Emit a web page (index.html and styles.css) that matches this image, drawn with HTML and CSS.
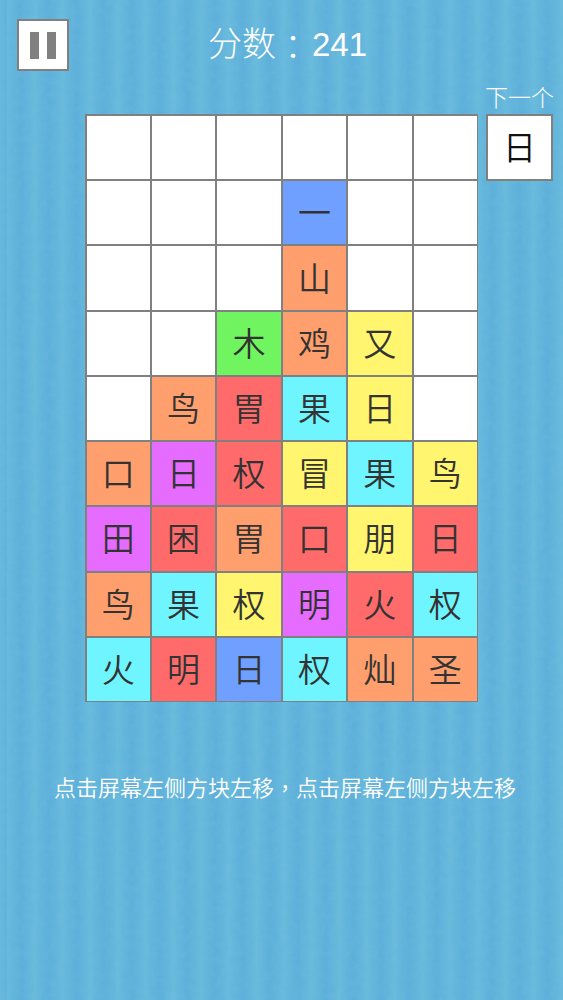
FILE: index.html
```html
<!DOCTYPE html>
<html lang="zh-CN">
<head>
<meta charset="utf-8">
<title>分数</title>
<link rel="stylesheet" href="styles.css">
</head>
<body>
<main class="screen">
  <header class="top">
    <button class="pause" aria-label="暂停"><span class="bar"></span><span class="bar"></span></button>
    <h1 class="score"><span class="zh">分数<span class="punct colon" lang="zh-TW">：</span></span><span class="num">241</span></h1>
  </header>
  <section class="play">
    <div class="board">
      <div class="cell"></div><div class="cell"></div><div class="cell"></div><div class="cell"></div><div class="cell"></div><div class="cell"></div>
      <div class="cell"></div><div class="cell"></div><div class="cell"></div><div class="cell blue">一</div><div class="cell"></div><div class="cell"></div>
      <div class="cell"></div><div class="cell"></div><div class="cell"></div><div class="cell orange">山</div><div class="cell"></div><div class="cell"></div>
      <div class="cell"></div><div class="cell"></div><div class="cell green">木</div><div class="cell orange">鸡</div><div class="cell yellow">又</div><div class="cell"></div>
      <div class="cell"></div><div class="cell orange">鸟</div><div class="cell red">胃</div><div class="cell cyan">果</div><div class="cell yellow">日</div><div class="cell"></div>
      <div class="cell orange">口</div><div class="cell purple">日</div><div class="cell red">权</div><div class="cell yellow">冒</div><div class="cell cyan">果</div><div class="cell yellow">鸟</div>
      <div class="cell purple">田</div><div class="cell red">困</div><div class="cell orange">胃</div><div class="cell red">口</div><div class="cell yellow">朋</div><div class="cell red">日</div>
      <div class="cell orange">鸟</div><div class="cell cyan">果</div><div class="cell yellow">权</div><div class="cell purple">明</div><div class="cell red">火</div><div class="cell cyan">权</div>
      <div class="cell cyan">火</div><div class="cell red">明</div><div class="cell blue">日</div><div class="cell cyan">权</div><div class="cell orange">灿</div><div class="cell orange">圣</div>
    </div>
    <aside class="next">
      <div class="next-label">下一个</div>
      <div class="next-box">日</div>
    </aside>
  </section>
  <p class="hint">点击屏幕左侧方块左移<span class="punct" lang="zh-TW">，</span>点击屏幕左侧方块左移</p>
</main>
</body>
</html>
```
FILE: styles.css
```css
* { box-sizing: border-box; }
html, body { margin: 0; padding: 0; }
body {
  width: 563px;
  height: 1000px;
  overflow: hidden;
  font-family: "Liberation Sans", "Noto Sans CJK SC", sans-serif;
}
.screen {
  width: 563px;
  height: 1000px;
  padding-top: 19px;
  background-color: #5fb3db;
  background-image:
    url("data:image/svg+xml,%3Csvg xmlns='http://www.w3.org/2000/svg' width='300' height='300'%3E%3Cfilter id='n'%3E%3CfeTurbulence type='fractalNoise' baseFrequency='0.14' numOctaves='3'/%3E%3CfeColorMatrix values='0 0 0 0 0.2 0 0 0 0 0.5 0 0 0 0 0.75 0 0 0 0.4 -0.08'/%3E%3C/filter%3E%3Crect width='300' height='300' filter='url(%23n)'/%3E%3C/svg%3E"),
    repeating-linear-gradient(90deg, #67bbdc 0, #60b4db 7px, #5bafda 14px, #60b4db 21px, #67bbdc 27.7px);
  background-position: 0 0, 7px 0;
}
.top {
  display: flex;
  align-items: center;
  height: 52px;
  padding-left: 17px;
}
.pause {
  display: flex;
  justify-content: center;
  gap: 8px;
  align-items: center;
  width: 52px;
  height: 52px;
  padding: 0;
  background: #fff;
  border: 2px solid #808080;
}
.bar {
  width: 9px;
  height: 27px;
  background: #808080;
}
.score {
  margin: 0 0 4px 139px;
  color: #fff;
  font-size: 33px;
  font-weight: 400;
  line-height: 50px;
  white-space: nowrap;
}
.zh { font-family: "Noto Sans CJK SC", sans-serif; font-size: 34px; font-weight: 300; }
.num { padding-left: 2px; }
.punct { font-family: "Noto Sans CJK TC", sans-serif; }
.colon { vertical-align: -4px; line-height: 1; }
.play {
  display: flex;
  align-items: flex-start;
  gap: 8px;
  margin-top: 43px;
  padding-left: 85px;
}
.board {
  display: grid;
  grid-template-columns: repeat(6, 1fr);
  grid-template-rows: repeat(9, 1fr);
  gap: 2px;
  width: 393px;
  height: 588px;
  padding: 2px 1px 1px 1.5px;
  background: #808080;
}
.cell {
  display: flex;
  align-items: center;
  justify-content: center;
  padding-bottom: 3px;
  background: #fff;
  color: #333;
  font-family: "Noto Sans CJK SC", sans-serif;
  font-size: 33px;
  font-weight: 350;
}
.blue { background: #6fa0ff; }
.orange { background: #ff9f6e; }
.green { background: #70f560; }
.yellow { background: #fff56e; }
.cyan { background: #6ff5ff; }
.red { background: #ff6b6b; }
.purple { background: #e66bff; }
.next {
  position: relative;
  width: 67px;
}
.next-label {
  position: absolute;
  left: -2px;
  top: -33px;
  width: 71px;
  color: #fff;
  font-family: "Noto Sans CJK SC", sans-serif;
  font-size: 23px;
  font-weight: 300;
  line-height: 30px;
  text-align: center;
  white-space: nowrap;
}
.next-box {
  display: flex;
  align-items: center;
  justify-content: center;
  width: 67px;
  height: 67px;
  padding-bottom: 3px;
  background: #fff;
  border: 2px solid #808080;
  color: #111;
  font-family: "Noto Sans CJK SC", sans-serif;
  font-size: 33px;
  font-weight: 350;
}
.hint {
  margin: 69px 0 0;
  padding-left: 54px;
  color: #fff;
  font-family: "Noto Sans CJK SC", sans-serif;
  font-size: 22px;
  font-weight: 350;
  line-height: 30px;
  white-space: nowrap;
}
```
